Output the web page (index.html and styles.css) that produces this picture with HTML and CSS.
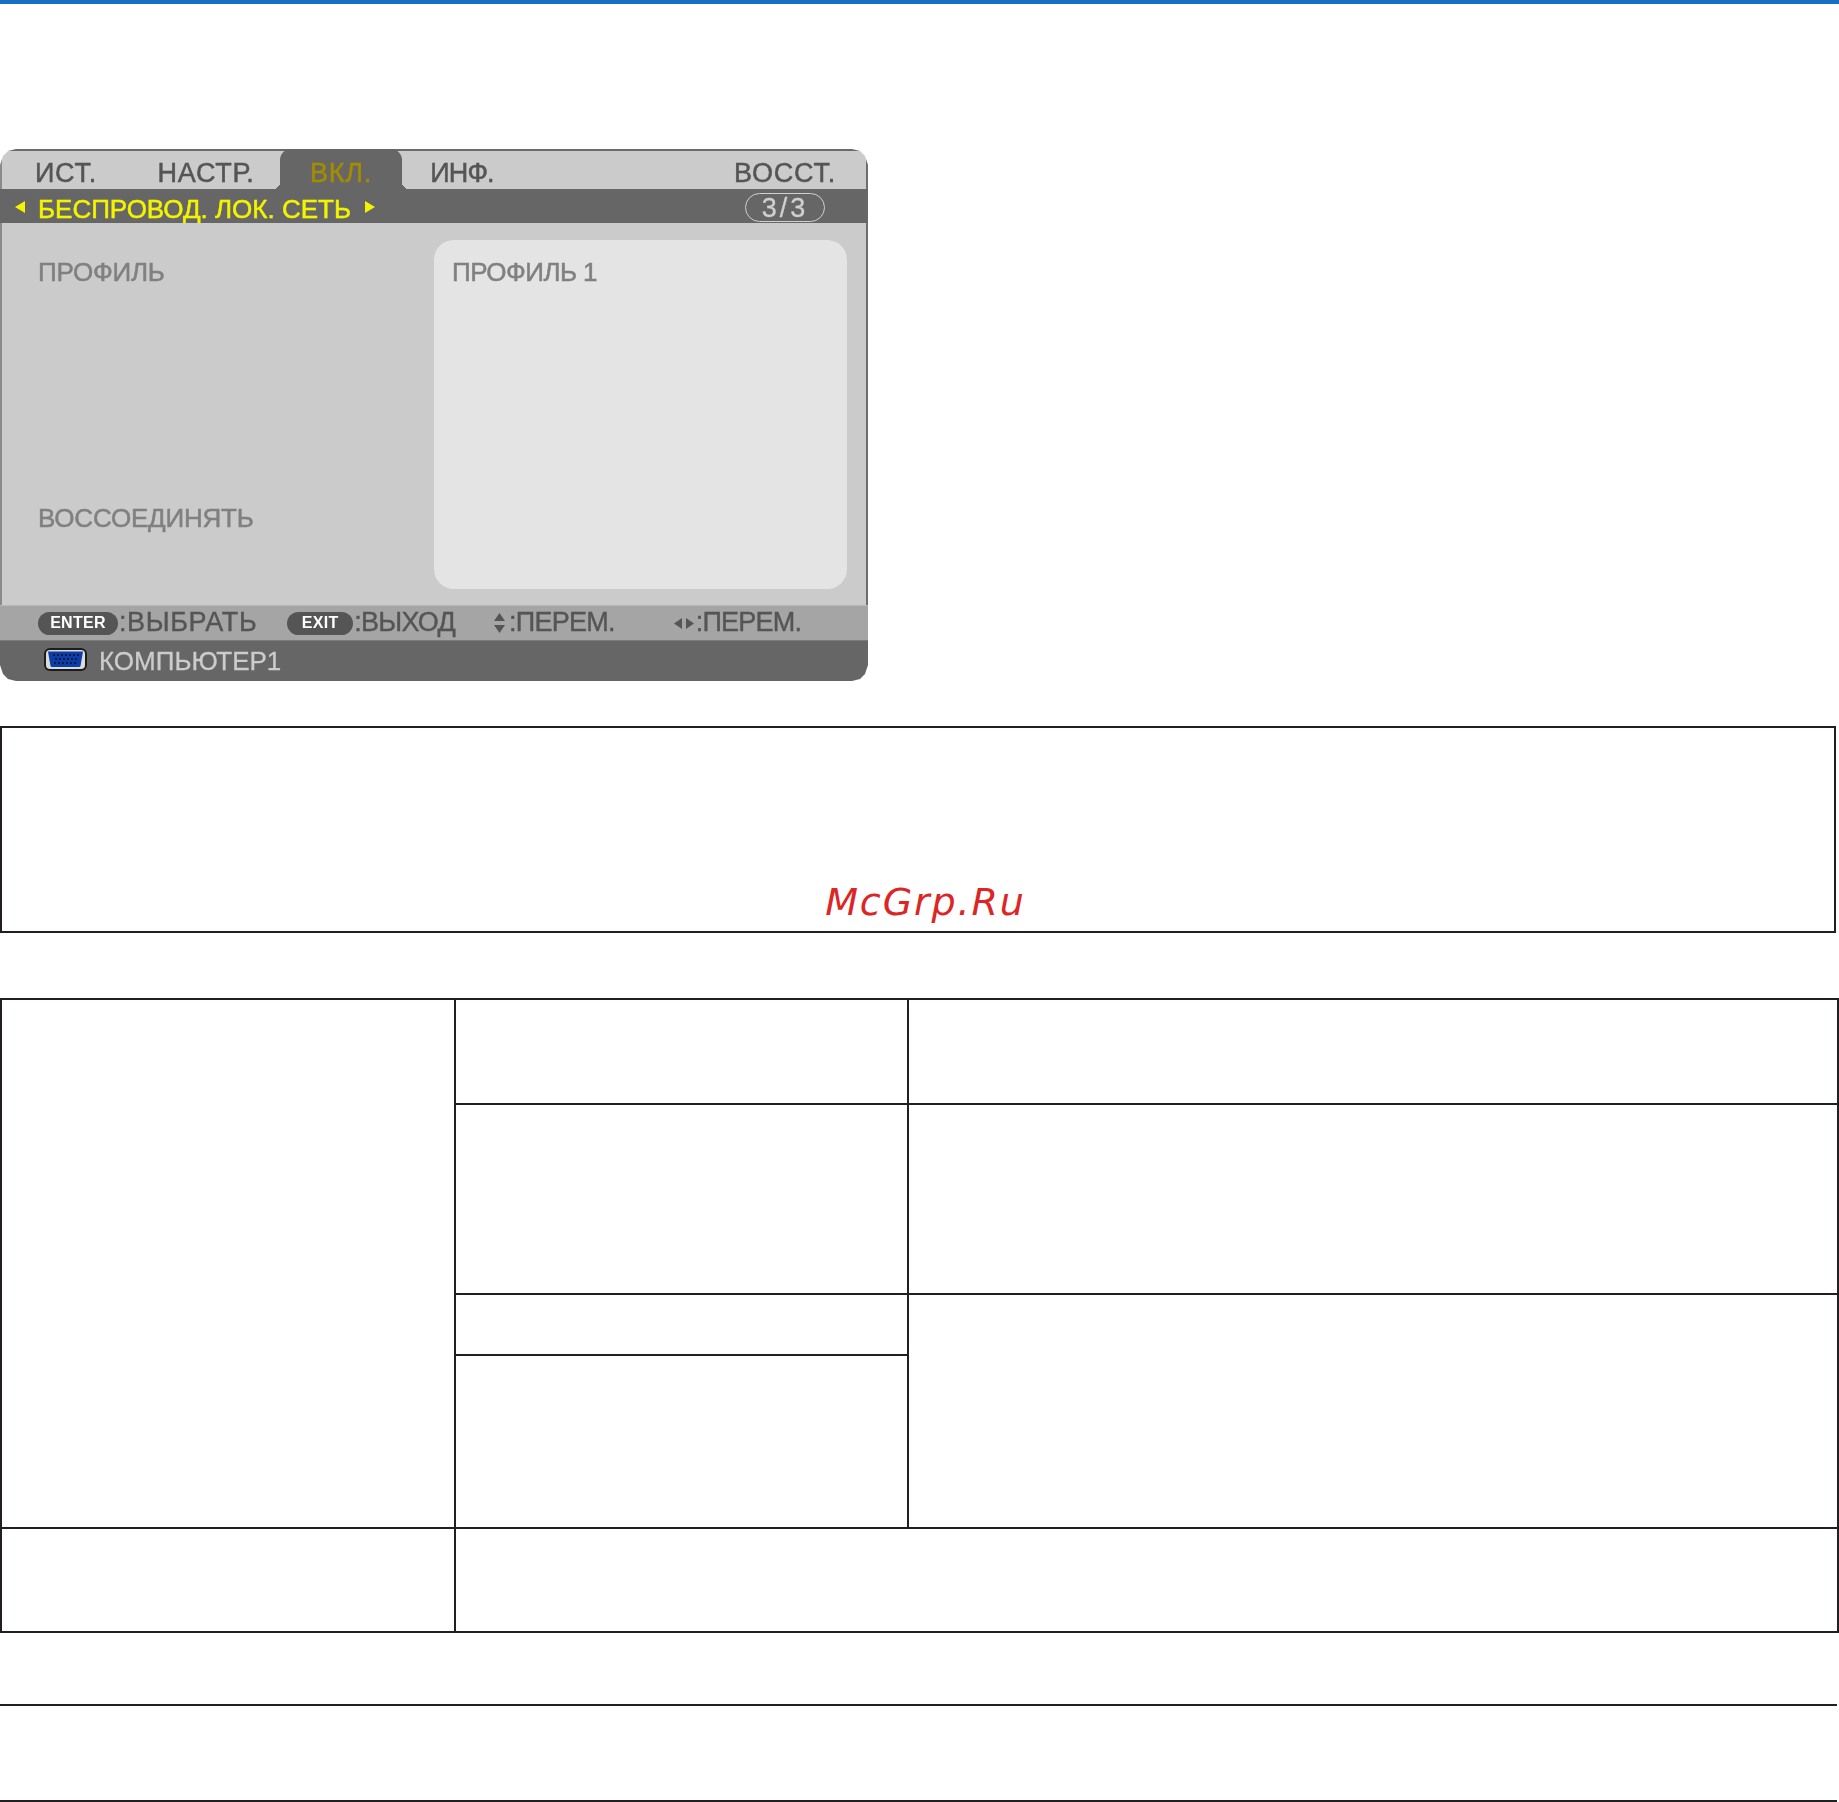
FILE: index.html
```html
<!DOCTYPE html>
<html lang="ru">
<head>
<meta charset="utf-8">
<title>БЕСПРОВОД. ЛОК. СЕТЬ</title>
<link rel="stylesheet" href="styles.css">
</head>
<body>
<div class="topbar"></div>

<section class="osd">
  <div class="tabs">
    <div class="tab">ИСТ.</div>
    <div class="tab">НАСТР.</div>
    <div class="tab tab-active">ВКЛ.</div>
    <div class="tab tab-tight">ИНФ.</div>
    <div class="tab-gap"></div>
    <div class="tab">ВОССТ.</div>
  </div>
  <div class="band">
    <svg class="tri tri-l" viewBox="0 0 10 12"><path d="M10 0V12L0 6Z"/></svg>
    <span class="band-title">БЕСПРОВОД. ЛОК. СЕТЬ</span>
    <svg class="tri tri-r" viewBox="0 0 10 12"><path d="M0 0V12L10 6Z"/></svg>
    <span class="pager">3/3</span>
  </div>
  <div class="content">
    <div class="labels">
      <span class="dim dim-a">ПРОФИЛЬ</span>
      <span class="dim dim-b">ВОССОЕДИНЯТЬ</span>
    </div>
    <div class="panel"><span class="dim dim-c">ПРОФИЛЬ 1</span></div>
  </div>
  <div class="hints">
    <span class="hint hint-enter"><span class="key key-enter">ENTER</span><span class="hint-text hint-wide">:ВЫБРАТЬ</span></span>
    <span class="hint hint-exit"><span class="key key-exit">EXIT</span><span class="hint-text">:ВЫХОД</span></span>
    <span class="hint hint-ud">
      <svg class="arrows-ud" viewBox="0 0 11 20"><path d="M5.500 0L11 8H0ZM5.500 20L0 12H11Z"/></svg><span class="hint-text">:ПЕРЕМ.</span>
    </span>
    <span class="hint hint-lr">
      <svg class="arrows-lr" viewBox="0 0 20 11"><path d="M0 5.500L8 0V11ZM20 5.500L12 11V0Z"/></svg><span class="hint-text">:ПЕРЕМ.</span>
    </span>
  </div>
  <div class="source">
    <svg class="vga" viewBox="0 0 43 23">
      <rect x="0" y="0" width="43" height="23" rx="6" fill="#1c1c1c"/>
      <rect x="2" y="2" width="39" height="19" rx="4" fill="#dcdcdc"/>
      <path d="M4 3.500H39L36.500 18Q36 19 35 19H8Q7 19 6.500 18Z" fill="#0b3ea6"/>
      <g fill="#0a1a44">
        <rect x="9" y="6" width="2" height="2"/><rect x="13" y="6" width="2" height="2"/><rect x="17" y="6" width="2" height="2"/><rect x="21" y="6" width="2" height="2"/><rect x="25" y="6" width="2" height="2"/><rect x="29" y="6" width="2" height="2"/><rect x="33" y="6" width="2" height="2"/>
        <rect x="11" y="10" width="2" height="2"/><rect x="15" y="10" width="2" height="2"/><rect x="19" y="10" width="2" height="2"/><rect x="23" y="10" width="2" height="2"/><rect x="27" y="10" width="2" height="2"/><rect x="31" y="10" width="2" height="2"/>
        <rect x="10" y="14" width="2" height="2"/><rect x="14" y="14" width="2" height="2"/><rect x="18" y="14" width="2" height="2"/><rect x="22" y="14" width="2" height="2"/><rect x="26" y="14" width="2" height="2"/><rect x="30" y="14" width="2" height="2"/>
      </g>
    </svg>
    <span class="source-name">КОМПЬЮТЕР1</span>
  </div>
</section>

<section class="notice"><span class="watermark">McGrp.Ru</span></section>

<section class="sheet">
  <div class="cell c-main"></div>
  <div class="cell c-a1"></div>
  <div class="cell c-b1"></div>
  <div class="cell c-a2"></div>
  <div class="cell c-b2"></div>
  <div class="cell c-a3"></div>
  <div class="cell c-b3"></div>
  <div class="cell c-a4"></div>
  <div class="cell c-foot-l"></div>
  <div class="cell c-foot-r"></div>
</section>

<div class="rule rule-a"></div>
<div class="rule rule-b"></div>
</body>
</html>
```
FILE: styles.css
```css
* { box-sizing: border-box; }
html, body { margin: 0; padding: 0; background: #fff; }
body { width: 1839px; height: 1802px; overflow: hidden; font-family: "Liberation Sans", Arial, sans-serif; }

.topbar { height: 4px; background: #1470c0; }

/* On-screen menu */
.osd {
  width: 868px; height: 532px; margin-top: 145px;
  display: flex; flex-direction: column;
  background: #cbcbcb;
  filter: blur(.45px);
  clip-path: polygon(
    16px 0, calc(100% - 16px) 0, calc(100% - 8px) 2px, calc(100% - 3px) 7px, 100% 16px,
    100% calc(100% - 16px), calc(100% - 3px) calc(100% - 7px), calc(100% - 8px) calc(100% - 2px), calc(100% - 16px) 100%,
    16px 100%, 8px calc(100% - 2px), 3px calc(100% - 7px), 0 calc(100% - 16px),
    0 16px, 3px 7px, 8px 2px);
  font-size: 26px; line-height: 1;
  box-shadow: inset 2px 0 0 #8a8a8a, inset -2px 0 0 #6e6e6e;
}
.tabs {
  height: 40px; flex: none;
  display: grid; grid-template-columns: 132px 148px 122px 120px 1fr 166px;
  border-top: 2px solid #6a6a6a;
  color: #555;
  font-size: 27px;
}
.tab { display: flex; align-items: center; justify-content: center; padding-top: 6px; letter-spacing: .8px; -webkit-text-stroke: .5px #555; }
.tab-tight { letter-spacing: -.9px; }
.tab-active { position: relative; background: #666; color: #a48c00; -webkit-text-stroke: .5px #a48c00; border-radius: 11px 11px 0 0; margin-top: -2px; padding-top: 8px; }
.tab-active::before, .tab-active::after { content: ""; position: absolute; bottom: 0; width: 4px; height: 5px; }
.tab-active::before { left: -4px; background: linear-gradient(to bottom right, transparent 50%, #666 50%); }
.tab-active::after { right: -4px; background: linear-gradient(to bottom left, transparent 50%, #666 50%); }

.band {
  height: 34px; flex: none; background: #666;
  display: flex; align-items: center;
  padding-left: 15px;
  color: #f4f400;
}
.tri { width: 10px; height: 12px; fill: #f4f400; flex: none; margin-bottom: -2px; }
.band-title { margin: 0 14px 0 13px; padding-top: 5px; -webkit-text-stroke: .5px #f4f400; }
.pager {
  margin-left: 370px; margin-top: 3px; width: 80px; height: 29px;
  border: 1px solid #d0d0d0; border-radius: 15px;
  color: #d0d0d0; text-align: center; line-height: 29px; font-size: 27px;
  letter-spacing: 3px; -webkit-text-stroke: .3px #d0d0d0;
}

.content {
  height: 382px; flex: none;
  display: grid; grid-template-columns: 434px 413px;
  padding-top: 17px;
}
.labels { display: flex; flex-direction: column; padding-left: 38px; padding-top: 19px; gap: 220px; }
.dim { color: #808080; -webkit-text-stroke: .5px #808080; }
.dim-a { letter-spacing: -.25px; }
.dim-b { letter-spacing: -.2px; }
.dim-c { letter-spacing: -.55px; }
.panel { height: 349px; background: #e4e4e4; border-radius: 20px; padding: 19px 18px; }

.hints { height: 35px; flex: none; background: #a5a5a5; border-top: 1px solid #b8b8b8; display: flex; align-items: center; color: #555; font-size: 27px; }
.hint { display: flex; align-items: center; flex: none; }
.hint-enter { margin-left: 38px; }
.hint-exit { margin-left: 30px; }
.hint-ud { margin-left: 39px; }
.hint-lr { margin-left: 59px; }
.hint-text { letter-spacing: -.75px; margin-bottom: 2px; -webkit-text-stroke: .4px #555; }
.hint-wide { letter-spacing: .6px; }
.key {
  height: 23px; background: #555; color: #fff; border-radius: 12px;
  display: flex; align-items: center; justify-content: center;
  font-size: 16px; font-weight: 700; letter-spacing: .3px;
  margin-right: 1px;
}
.key-enter { width: 80px; }
.key-exit { width: 66px; }
.arrows-ud { width: 11px; height: 20px; fill: #555; margin-right: 4px; }
.arrows-lr { width: 20px; height: 11px; fill: #555; margin-right: 2px; }

.source { height: 41px; flex: none; background: #666; border-top: 1px solid #7a7a7a; display: flex; align-items: center; padding-left: 44px; color: #ccc; }
.vga { width: 43px; height: 23px; flex: none; margin-top: -4px; }
.source-name { margin-left: 12px; -webkit-text-stroke: .3px #ccc; }

/* Empty bordered note */
.notice {
  width: 1836px; height: 207px; margin-top: 45px;
  border: 2px solid #231f20;
  display: flex; align-items: flex-end; justify-content: center;
  padding: 0 0 10px 15px;
}
.watermark {
  font-family: "DejaVu Sans", sans-serif; font-style: oblique;
  font-size: 38px; line-height: 38px; letter-spacing: 1.9px;
  color: #dc2626;
}

/* Empty table */
.sheet {
  width: 1839px; height: 635px; margin-top: 65px;
  display: grid; gap: 2px; padding: 2px;
  grid-template-columns: 452px 451px 1fr;
  grid-template-rows: 103px 188px 59px 171px 102px;
  background: #231f20;
}
.cell { background: #fff; }
.c-main { grid-column: 1; grid-row: 1 / span 4; }
.c-b3 { grid-column: 3; grid-row: 3 / span 2; }
.c-a4 { grid-column: 2; grid-row: 4; }
.c-foot-l { grid-column: 1; grid-row: 5; }
.c-foot-r { grid-column: 2 / span 2; grid-row: 5; }

.rule { width: 1837px; height: 2px; background: #231f20; }
.rule-a { margin-top: 71px; }
.rule-b { margin-top: 94px; }
```
